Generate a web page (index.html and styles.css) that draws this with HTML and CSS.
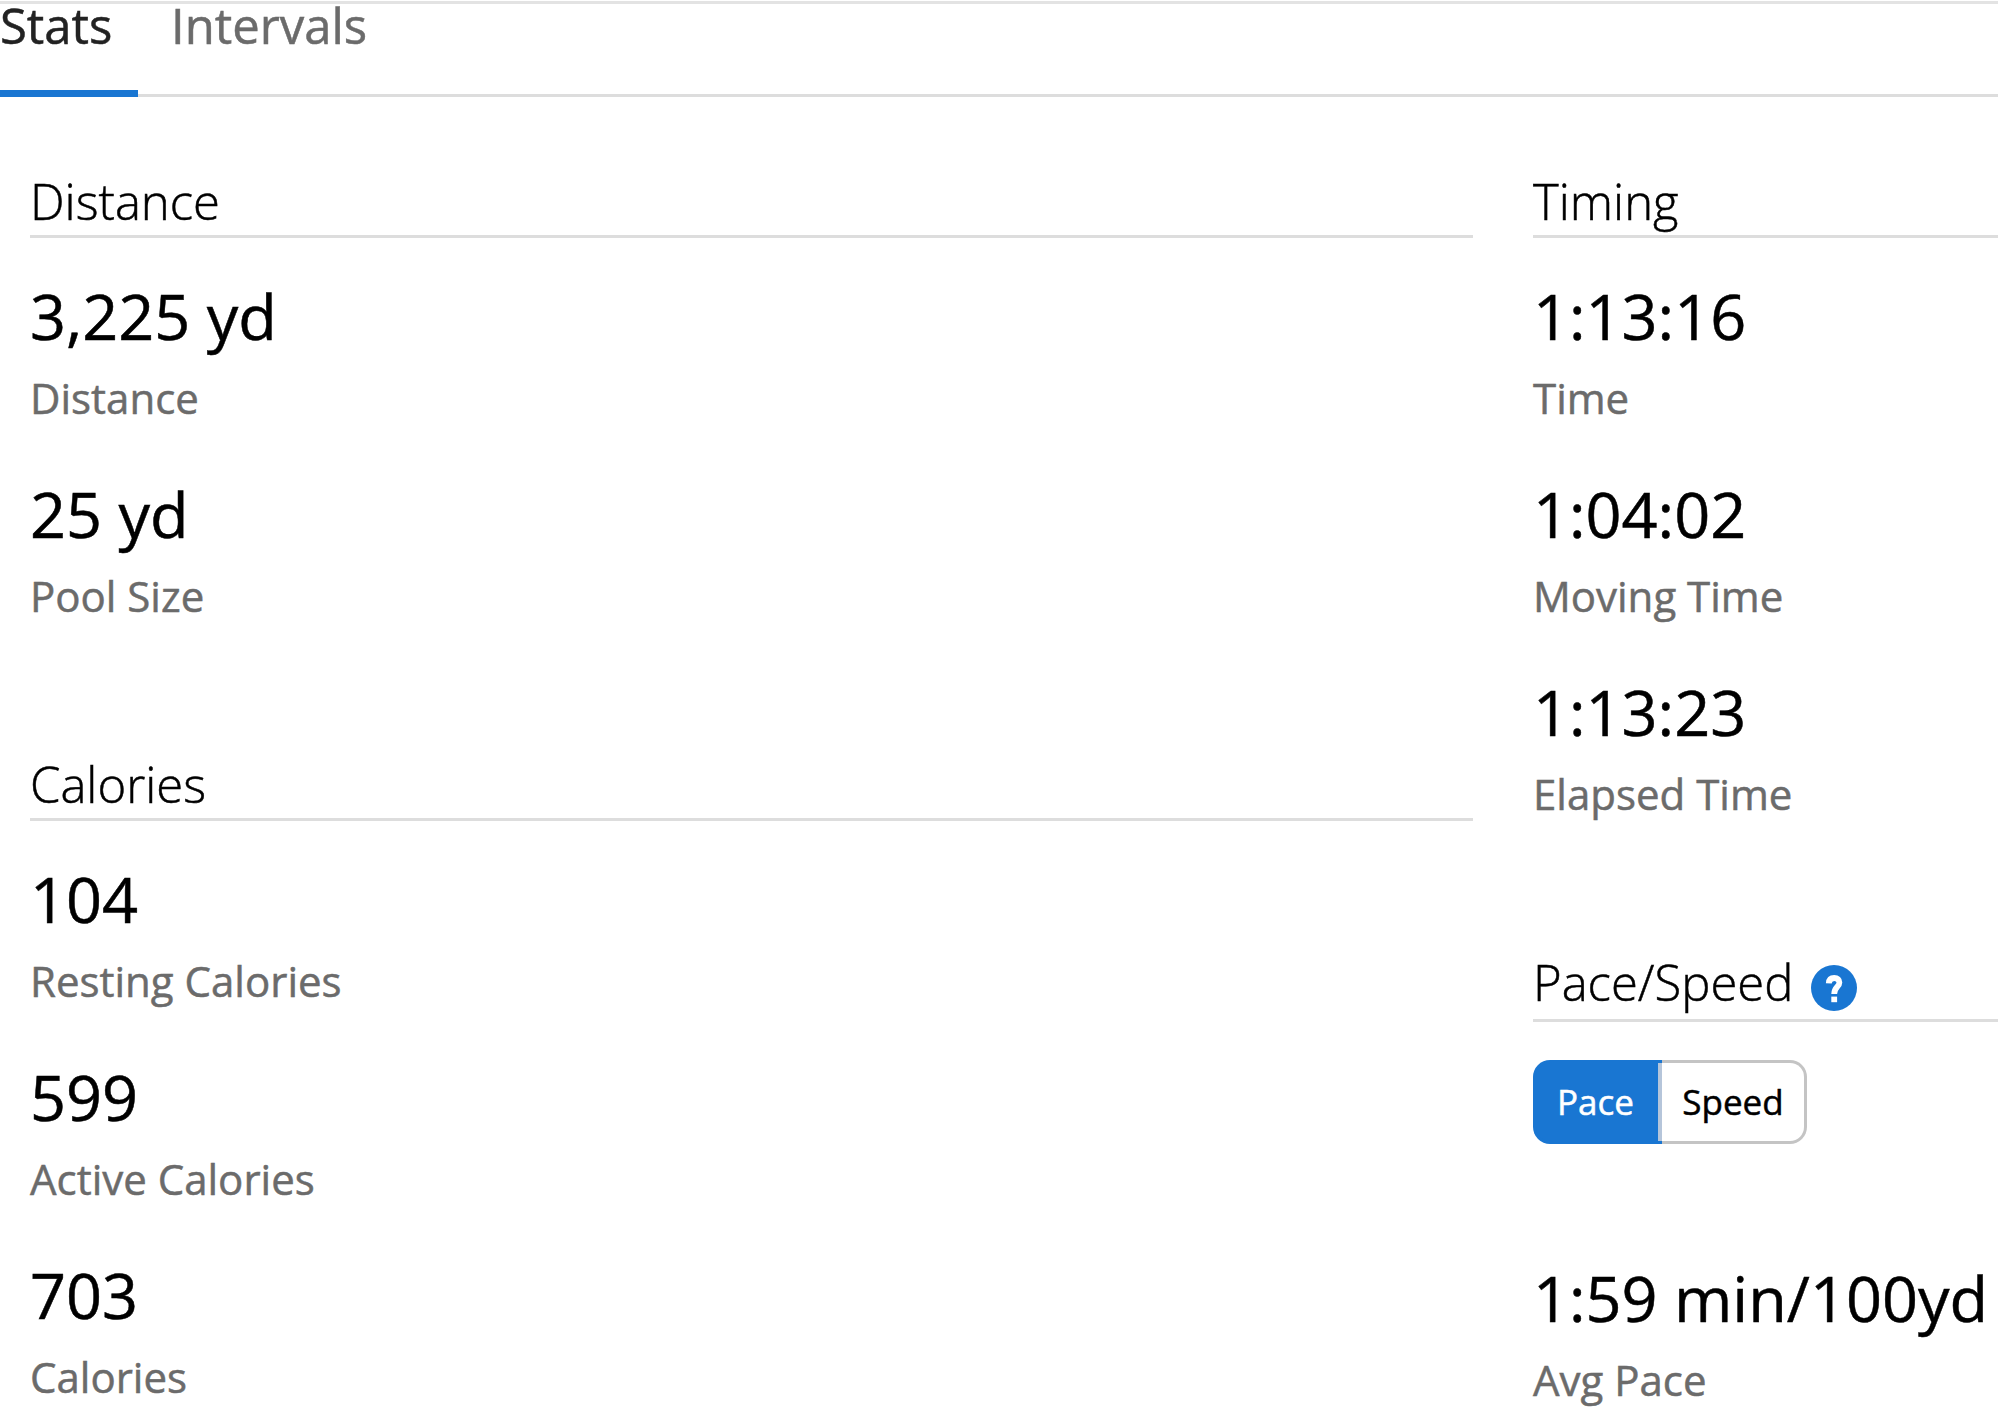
FILE: index.html
```html
<!DOCTYPE html>
<html lang="en">
<head>
    <meta charset="UTF-8">
    <title>Activity Stats</title>
    <link rel="stylesheet" href="styles.css">
</head>
<body>
    <nav class="tabs">
        <a class="tab active">Stats</a>
        <a class="tab">Intervals</a>
    </nav>

    <main class="columns">
        <div class="column">
            <section class="group">
                <h3>Distance</h3>
                <div class="stat"><div class="value">3,225 yd</div><div class="label">Distance</div></div>
                <div class="stat"><div class="value">25 yd</div><div class="label">Pool Size</div></div>
            </section>
            <section class="group">
                <h3>Calories</h3>
                <div class="stat"><div class="value">104</div><div class="label">Resting Calories</div></div>
                <div class="stat"><div class="value">599</div><div class="label">Active Calories</div></div>
                <div class="stat"><div class="value">703</div><div class="label">Calories</div></div>
            </section>
        </div>

        <div class="column">
            <section class="group">
                <h3>Timing</h3>
                <div class="stat"><div class="value">1:13:16</div><div class="label">Time</div></div>
                <div class="stat"><div class="value">1:04:02</div><div class="label">Moving Time</div></div>
                <div class="stat"><div class="value">1:13:23</div><div class="label">Elapsed Time</div></div>
            </section>
            <section class="group">
                <h3 class="with-help">Pace/Speed
                    <svg class="help" viewBox="0 0 46 46">
                        <circle cx="23" cy="23" r="23" fill="#1976d2"/>
                        <path d="M17.8 18.3C18 14.8 20 13 23.2 13C26.5 13 28.4 14.8 28.4 17.6C28.4 22 23.2 22 23.2 29" fill="none" stroke="#fff" stroke-width="5.8"/>
                        <rect x="20.3" y="31.6" width="5.8" height="5.6" fill="#fff"/>
                    </svg>
                </h3>
                <div class="toggle">
                    <button class="on">Pace</button>
                    <button>Speed</button>
                </div>
                <div class="stat"><div class="value">1:59 min/100yd</div><div class="label">Avg Pace</div></div>
            </section>
        </div>
    </main>
</body>
</html>
```

FILE: styles.css
```css
* {
    box-sizing: border-box;
}

body {
    margin: 0;
    padding-top: 1px;
    height: 1422px;
    overflow: hidden;
    background-color: #fff;
    color: #000;
    font-family: "Open Sans", sans-serif;
    -webkit-text-stroke: 0.5px;
}

.tabs {
    display: flex;
    height: 96px;
    border-top: 3px solid #e3e3e3;
    border-bottom: 3px solid #ddd;
}

.tab {
    height: 93px;
    padding: 0 33px;
    color: #6b6b6b;
    font-size: 49px;
    line-height: 42px;
}

.tab.active {
    width: 138px;
    padding: 0;
    border-bottom: 7px solid #1976d2;
    color: #222;
}

.columns {
    display: grid;
    grid-template-columns: 1443px 1fr;
    column-gap: 60px;
    padding: 74px 0 0 30px;
}

.group {
    margin-bottom: 82px;
}

.group:last-child {
    margin-bottom: 0;
}

h3 {
    display: flex;
    align-items: flex-start;
    height: 67px;
    margin: 0 0 38px;
    border-bottom: 3px solid #ddd;
    font-size: 49px;
    font-weight: 300;
    line-height: 60px;
}

h3.with-help {
    height: 70px;
}

.stat {
    height: 198px;
}

.stat:last-child {
    height: auto;
}

.group:first-child .stat:last-child {
    height: 198px;
}

.value {
    font-size: 63px;
    line-height: 80px;
    white-space: nowrap;
}

.label {
    margin-top: 10px;
    color: #6b6b6b;
    font-size: 42px;
    line-height: 64px;
}

.help {
    width: 46px;
    height: 46px;
    margin: 13px 0 0 18px;
}

.toggle {
    display: flex;
    width: 274px;
    height: 84px;
    margin-bottom: 114px;
}

.toggle button {
    flex: 1;
    padding: 0 0 2px;
    border: 3px solid #c4c4c4;
    border-left: 0;
    border-radius: 0 17px 17px 0;
    background-color: #fff;
    font-family: inherit;
    font-size: 35px;
    -webkit-text-stroke: 0.5px;
}

.toggle .on {
    flex: 0 0 129px;
    padding: 0 7px 2px 0;
    border: 3px solid #1976d2;
    border-right: 0;
    border-radius: 17px 0 0 17px;
    background-color: #1976d2;
    box-shadow: inset -4px 0 #b5c5da;
    color: #fff;
}
```
